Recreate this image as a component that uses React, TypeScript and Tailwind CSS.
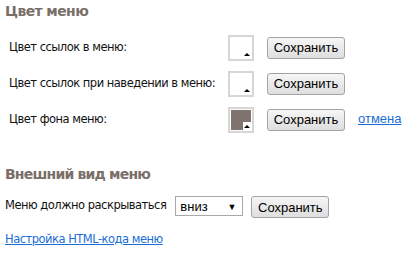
const labelFont = { fontFamily: "Tahoma, 'DejaVu Sans', Verdana, sans-serif" };

function Swatch({ color }: { color?: string }) {
  return (
    <div className="relative shrink-0 w-[26px] h-[26px] border-2 border-[#d6d6d6] bg-white p-px">
      <div className="w-full h-full" style={{ backgroundColor: color ?? "#ffffff" }} />
      <div className="absolute right-px bottom-px w-[8px] h-[8px] bg-white flex items-center justify-center">
        <div className="w-0 h-0 border-l-[3px] border-r-[3px] border-b-[3px] border-l-transparent border-r-transparent border-b-black" />
      </div>
    </div>
  );
}

function SaveButton() {
  return (
    <button className="shrink-0 h-[22px] w-[78px] rounded-[3px] border border-[#a3a3a3] bg-gradient-to-b from-[#f6f6f6] to-[#dedede] text-[13px] text-black font-['Liberation_Sans',Arial,sans-serif] leading-none">
      Сохранить
    </button>
  );
}

function ColorRow({ label, color, cancel }: { label: string; color?: string; cancel?: boolean }) {
  return (
    <div className="flex items-center h-[26px]">
      <div
        className="w-[228px] shrink-0 whitespace-nowrap pl-[9px] text-[11.5px] tracking-[-0.5px] text-[#111]"
        style={labelFont}
      >
        {label}
      </div>
      <Swatch color={color} />
      <div className="ml-[13px] -mt-[3px] shrink-0">
        <SaveButton />
      </div>
      {cancel && (
        <a
          href="#"
          className="ml-[13px] -mt-[2px] whitespace-nowrap text-[13px] text-[#1a6ed6] underline font-['Liberation_Sans',Arial,sans-serif]"
        >
          отмена
        </a>
      )}
    </div>
  );
}

export default function App() {
  return (
    <div className="w-[410px] h-[256px] bg-white pl-[5px] pt-[1px] overflow-hidden">
      <h2
        className="text-[14px] font-bold text-[#7a6f68] tracking-[-0.6px] leading-[20px]"
        style={labelFont}
      >
        Цвет меню
      </h2>
      <div className="-ml-[5px] mt-[14px] flex flex-col gap-[10px]">
        <ColorRow label="Цвет ссылок в меню:" />
        <ColorRow label="Цвет ссылок при наведении в меню:" />
        <ColorRow label="Цвет фона меню:" color="#7f756e" cancel />
      </div>
      <h2
        className="mt-[31px] text-[14px] font-bold text-[#7a6f68] tracking-[-0.8px] leading-[20px]"
        style={labelFont}
      >
        Внешний вид меню
      </h2>
      <div className="mt-[11px] flex items-center h-[22px]">
        <span className="whitespace-nowrap text-[11.5px] tracking-[-0.5px] text-[#111]" style={labelFont}>
          Меню должно раскрываться
        </span>
        <div className="ml-[9px] shrink-0 w-[68px] h-[20px] border border-[#a9a9a9] bg-white flex items-center justify-between pl-[4px] pr-[6px]">
          <span className="text-[13px] text-black font-['Liberation_Sans',Arial,sans-serif] leading-none">вниз</span>
          <span className="text-[9px] text-black leading-none">▼</span>
        </div>
        <div className="ml-[8px] shrink-0">
          <SaveButton />
        </div>
      </div>
      <a
        href="#"
        className="block mt-[14px] text-[11.5px] tracking-[-0.5px] text-[#1a6ed6] underline"
        style={labelFont}
      >
        Настройка HTML-кода меню
      </a>
    </div>
  );
}
